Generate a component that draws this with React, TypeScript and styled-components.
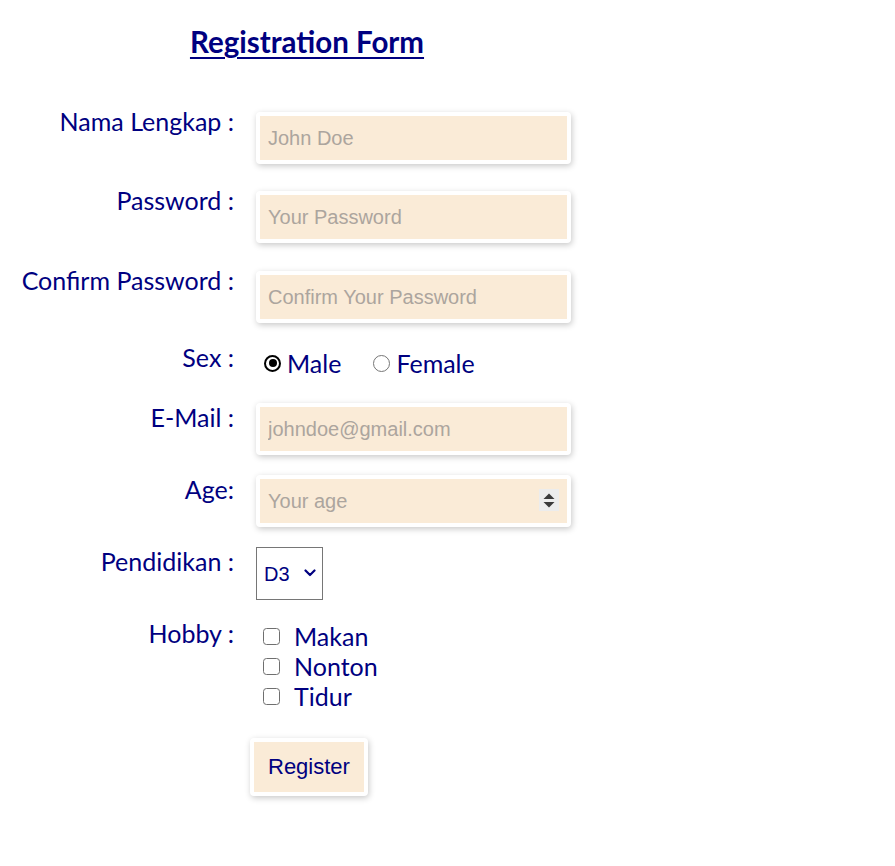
import React from "react";
import styled, { createGlobalStyle } from "styled-components";

const GlobalStyle = createGlobalStyle`
  html, body { margin: 0; padding: 0; background: #ffffff; }
  body { font-family: "Lato", "Open Sans", sans-serif; }
`;

const Page = styled.main`
  padding: 25px 8px 40px;
`;

const Title = styled.h1`
  width: 598px;
  margin: 0;
  text-align: center;
  font-family: "Lato", "Open Sans", sans-serif;
  font-weight: 700;
  font-size: 29.5px;
  line-height: 34px;
  color: #000080;
  text-decoration: underline;
  text-decoration-thickness: 2px;
  text-underline-offset: 4px;
`;

const Form = styled.form`
  display: flex;
  flex-direction: column;
`;

const Row = styled.div<{ $gap: number }>`
  display: grid;
  grid-template-columns: 226px 315px;
  column-gap: 22px;
  align-items: start;
  margin-top: ${(p) => p.$gap}px;
`;

const Label = styled.label<{ $offset: number }>`
  text-align: right;
  font-family: "Lato", "Open Sans", sans-serif;
  font-size: 25px;
  line-height: 24px;
  color: #000080;
  white-space: nowrap;
  margin-top: ${(p) => p.$offset}px;
`;

const Field = styled.div`
  position: relative;
  width: 315px;
`;

const TextInput = styled.input`
  box-sizing: border-box;
  width: 315px;
  height: 52px;
  margin: 0;
  padding: 0 8px;
  border: 4px solid #ffffff;
  border-radius: 4px;
  background: #faebd7;
  box-shadow: 1px 2px 6px rgba(0, 0, 0, 0.22);
  font-family: "Liberation Sans", Arial, sans-serif;
  font-size: 20px;
  color: #000080;
  outline: none;

  &::placeholder {
    color: #aca59e;
  }

  &::-webkit-inner-spin-button,
  &::-webkit-outer-spin-button {
    -webkit-appearance: none;
    margin: 0;
  }
`;

const Spinner = styled.span`
  position: absolute;
  right: 12px;
  top: 14px;
  width: 20px;
  height: 22px;
  background: #ececec;
  display: flex;
  align-items: center;
  justify-content: center;
  pointer-events: none;
`;

const ChoiceGroup = styled.div`
  display: flex;
  align-items: center;
  height: 24px;
  font-family: "Lato", "Open Sans", sans-serif;
  font-size: 25px;
  line-height: 24px;
  color: #000080;
`;

const Radio = styled.input<{ $lead: number }>`
  appearance: none;
  -webkit-appearance: none;
  box-sizing: border-box;
  width: 17px;
  height: 17px;
  margin: 0 6px 0 ${(p) => p.$lead}px;
  border-radius: 50%;
  border: 1.5px solid #767676;
  background: #ffffff;
  position: relative;

  &:checked {
    border: 2px solid #000000;
  }
  &:checked::after {
    content: "";
    position: absolute;
    left: 2.5px;
    top: 2.5px;
    width: 8px;
    height: 8px;
    border-radius: 50%;
    background: #000000;
  }
`;

const CheckList = styled.div`
  display: flex;
  flex-direction: column;
  font-family: "Lato", "Open Sans", sans-serif;
  font-size: 25px;
  line-height: 30px;
  color: #000080;
`;

const CheckItem = styled.label`
  display: flex;
  align-items: center;
  height: 30px;
`;

const Checkbox = styled.input`
  appearance: none;
  -webkit-appearance: none;
  box-sizing: border-box;
  width: 17px;
  height: 17px;
  margin: 0 14px 0 7px;
  border: 1.5px solid #6f6f6f;
  border-radius: 3.5px;
  background: #ffffff;
`;

const SelectWrap = styled.div`
  position: relative;
  width: 67px;
  height: 53px;
`;

const Select = styled.select`
  appearance: none;
  -webkit-appearance: none;
  box-sizing: border-box;
  width: 67px;
  height: 53px;
  margin: 0;
  padding: 0 0 0 7px;
  border: 1px solid #767676;
  border-radius: 0;
  background: #ffffff;
  font-family: "Liberation Sans", Arial, sans-serif;
  font-size: 20px;
  color: #000080;
  outline: none;
`;

const Chevron = styled.svg`
  position: absolute;
  right: 7px;
  top: 22px;
  pointer-events: none;
`;

const Button = styled.button`
  box-sizing: border-box;
  justify-self: start;
  height: 58px;
  margin: 0 0 0 -6px;
  padding: 0 14px;
  border: 4px solid #ffffff;
  border-radius: 4px;
  background: #faebd7;
  box-shadow: 1px 2px 6px rgba(0, 0, 0, 0.22);
  font-family: "Liberation Sans", Arial, sans-serif;
  font-size: 22px;
  color: #000080;
  cursor: pointer;
`;

const Empty = styled.div``;

export default function App() {
  return (
    <>
      <GlobalStyle />
      <Page>
        <Title>Registration Form</Title>
        <Form onSubmit={(e) => e.preventDefault()}>
          <Row $gap={53}>
            <Label $offset={-3} htmlFor="nama">Nama Lengkap :</Label>
            <TextInput id="nama" type="text" placeholder="John Doe" />
          </Row>
          <Row $gap={27}>
            <Label $offset={-3} htmlFor="pass">Password :</Label>
            <TextInput id="pass" type="password" placeholder="Your Password" />
          </Row>
          <Row $gap={28}>
            <Label $offset={-3} htmlFor="cpass">Confirm Password :</Label>
            <TextInput id="cpass" type="password" placeholder="Confirm Your Password" />
          </Row>
          <Row $gap={28}>
            <Label $offset={-6}>Sex :</Label>
            <ChoiceGroup>
              <Radio $lead={8} type="radio" name="sex" defaultChecked />
              Male
              <Radio $lead={32} type="radio" name="sex" />
              Female
            </ChoiceGroup>
          </Row>
          <Row $gap={28}>
            <Label $offset={2} htmlFor="email">E-Mail :</Label>
            <TextInput id="email" type="email" placeholder="johndoe@gmail.com" />
          </Row>
          <Row $gap={20}>
            <Label $offset={2} htmlFor="age">Age:</Label>
            <Field>
              <TextInput id="age" type="number" placeholder="Your age" />
              <Spinner>
                <svg width="12" height="15" viewBox="0 0 12 15">
                  <path d="M6 0.5 L11.5 6 L0.5 6 Z" fill="#3a3a3a" />
                  <path d="M0.5 9 L11.5 9 L6 14.5 Z" fill="#3a3a3a" />
                </svg>
              </Spinner>
            </Field>
          </Row>
          <Row $gap={20}>
            <Label $offset={2} htmlFor="pend">Pendidikan :</Label>
            <SelectWrap>
              <Select id="pend" defaultValue="D3">
                <option>SMA</option>
                <option>D3</option>
                <option>S1</option>
                <option>S2</option>
              </Select>
              <Chevron width="12" height="8" viewBox="0 0 12 8">
                <path d="M1.5 1.5 L6 6 L10.5 1.5" fill="none" stroke="#000080" strokeWidth="2.2" strokeLinecap="round" strokeLinejoin="round" />
              </Chevron>
            </SelectWrap>
          </Row>
          <Row $gap={21}>
            <Label $offset={0}>Hobby :</Label>
            <CheckList>
              <CheckItem><Checkbox type="checkbox" />Makan</CheckItem>
              <CheckItem><Checkbox type="checkbox" />Nonton</CheckItem>
              <CheckItem><Checkbox type="checkbox" />Tidur</CheckItem>
            </CheckList>
          </Row>
          <Row $gap={27}>
            <Empty />
            <Button type="submit">Register</Button>
          </Row>
        </Form>
      </Page>
    </>
  );
}
